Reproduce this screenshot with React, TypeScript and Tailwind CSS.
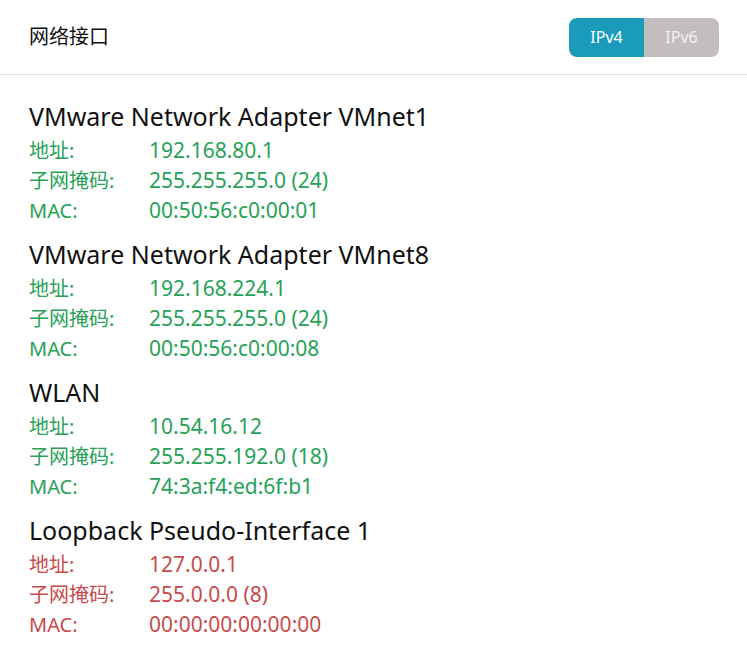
import { useState } from "react";

type Iface = {
  name: string;
  addr: string;
  mask: string;
  mac: string;
  loopback?: boolean;
};

const ifaces: Iface[] = [
  { name: "VMware Network Adapter VMnet1", addr: "192.168.80.1", mask: "255.255.255.0 (24)", mac: "00:50:56:c0:00:01" },
  { name: "VMware Network Adapter VMnet8", addr: "192.168.224.1", mask: "255.255.255.0 (24)", mac: "00:50:56:c0:00:08" },
  { name: "WLAN", addr: "10.54.16.12", mask: "255.255.192.0 (18)", mac: "74:3a:f4:ed:6f:b1" },
  { name: "Loopback Pseudo-Interface 1", addr: "127.0.0.1", mask: "255.0.0.0 (8)", mac: "00:00:00:00:00:00", loopback: true },
];

function Row({ label, value, loopback }: { label: string; value: string; loopback?: boolean }) {
  return (
    <div className={`flex h-[30px] items-center text-[20px] ${loopback ? "text-[#c94b4b]" : "text-[#27a257]"}`}>
      <span className="w-[120px]">{label}</span>
      <span className="text-[21px]">{value}</span>
    </div>
  );
}

export default function App() {
  const [mode, setMode] = useState("ipv4");

  return (
    <div className="min-h-screen w-full bg-white font-['Noto_Sans','Noto_Sans_CJK_SC',sans-serif] text-black">
      <header className="flex h-[75px] items-center justify-between border-b border-[#e2e2e2] pl-[29px] pr-[28px]">
        <h1 className="text-[20px] font-normal text-[#111]">网络接口</h1>
        <div className="flex h-[39px] overflow-hidden rounded-[8px] text-[16px]">
          <button
            onClick={() => setMode("ipv4")}
            className={`w-[75px] ${mode === "ipv4" ? "bg-[#1a9bbb] text-white" : "bg-[#c4bdbd] text-[#f3f0f0]"}`}
          >
            IPv4
          </button>
          <button
            onClick={() => setMode("ipv6")}
            className={`w-[75px] ${mode === "ipv6" ? "bg-[#1a9bbb] text-white" : "bg-[#c4bdbd] text-[#f3f0f0]"}`}
          >
            IPv6
          </button>
        </div>
      </header>

      <main className="flex flex-col gap-[10px] px-[29px] pt-[23px]">
        {ifaces.map((f) => (
          <section key={f.name}>
            <div className="flex h-[38px] items-center text-[25px] text-[#111]">{f.name}</div>
            <Row label="地址:" value={f.addr} loopback={f.loopback} />
            <Row label="子网掩码:" value={f.mask} loopback={f.loopback} />
            <Row label="MAC:" value={f.mac} loopback={f.loopback} />
          </section>
        ))}
      </main>
    </div>
  );
}
